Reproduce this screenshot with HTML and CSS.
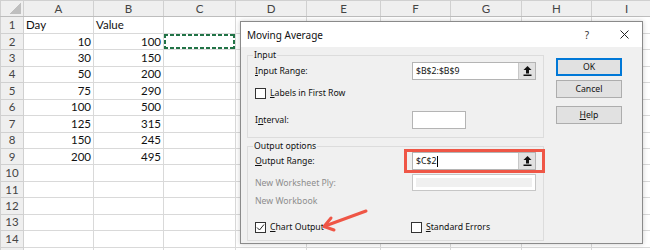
FILE: index.html
```html
<!DOCTYPE html>
<html lang="en">
<head>
    <meta charset="UTF-8">
    <title>Moving Average</title>
    <link rel="stylesheet" href="styles.css">
</head>
<body>

<table class="sheet">
    <colgroup>
        <col class="c-num"><col class="c-a"><col class="c-b"><col class="c-c"><col class="c-d">
        <col class="c-e"><col class="c-f"><col class="c-g"><col class="c-h"><col class="c-i">
    </colgroup>
    <tr class="head">
        <th class="corner"></th><th>A</th><th>B</th><th>C</th><th>D</th><th>E</th><th>F</th><th>G</th><th>H</th><th>I</th>
    </tr>
    <tr><th>1</th><td>Day</td><td>Value</td><td></td><td></td><td></td><td></td><td></td><td></td><td></td></tr>
    <tr><th>2</th><td class="num">10</td><td class="num">100</td><td class="marquee"></td><td></td><td></td><td></td><td></td><td></td><td></td></tr>
    <tr><th>3</th><td class="num">30</td><td class="num">150</td><td></td><td></td><td></td><td></td><td></td><td></td><td></td></tr>
    <tr><th>4</th><td class="num">50</td><td class="num">200</td><td></td><td></td><td></td><td></td><td></td><td></td><td></td></tr>
    <tr><th>5</th><td class="num">75</td><td class="num">290</td><td></td><td></td><td></td><td></td><td></td><td></td><td></td></tr>
    <tr><th>6</th><td class="num">100</td><td class="num">500</td><td></td><td></td><td></td><td></td><td></td><td></td><td></td></tr>
    <tr><th>7</th><td class="num">125</td><td class="num">315</td><td></td><td></td><td></td><td></td><td></td><td></td><td></td></tr>
    <tr><th>8</th><td class="num">150</td><td class="num">245</td><td></td><td></td><td></td><td></td><td></td><td></td><td></td></tr>
    <tr><th>9</th><td class="num">200</td><td class="num">495</td><td></td><td></td><td></td><td></td><td></td><td></td><td></td></tr>
    <tr><th>10</th><td></td><td></td><td></td><td></td><td></td><td></td><td></td><td></td><td></td></tr>
    <tr><th>11</th><td></td><td></td><td></td><td></td><td></td><td></td><td></td><td></td><td></td></tr>
    <tr><th>12</th><td></td><td></td><td></td><td></td><td></td><td></td><td></td><td></td><td></td></tr>
    <tr><th>13</th><td></td><td></td><td></td><td></td><td></td><td></td><td></td><td></td><td></td></tr>
    <tr><th>14</th><td></td><td></td><td></td><td></td><td></td><td></td><td></td><td></td><td></td></tr>
    <tr><th></th><td></td><td></td><td></td><td></td><td></td><td></td><td></td><td></td><td></td></tr>
</table>

<div class="dialog">
    <div class="titlebar">
        <span class="title">Moving Average</span>
        <span class="help-mark">?</span>
        <svg class="close" width="9" height="9" viewBox="0 0 9 9">
            <path d="M0.5 0.5 L8.5 8.5 M8.5 0.5 L0.5 8.5" stroke="#222" stroke-width="1" fill="none"/>
        </svg>
    </div>

    <div class="dialog-body">
        <div class="groups">
            <fieldset class="group group-input">
                <legend>Input</legend>
                <div class="field row-range">
                    <label><u>I</u>nput Range:</label>
                    <div class="textbox">
                        <span>$B$2:$B$9</span>
                        <span class="refbtn">
                            <svg width="9" height="10" viewBox="0 0 9 10"><path d="M4.5 0 L8.5 4 L6 4 L6 7.5 L3 7.5 L3 4 L0.5 4 Z M0.5 8.5 H8.5 V10 H0.5 Z" fill="#111"/></svg>
                        </span>
                    </div>
                </div>
                <div class="field row-labels">
                    <span class="check"></span>
                    <label><u>L</u>abels in First Row</label>
                </div>
                <div class="field row-interval">
                    <label>I<u>n</u>terval:</label>
                    <div class="textbox short"></div>
                </div>
            </fieldset>

            <fieldset class="group group-output">
                <legend>Output options</legend>
                <div class="field row-output">
                    <label><u>O</u>utput Range:</label>
                    <div class="highlight">
                        <div class="textbox">
                            <span>$C$2</span><span class="caret"></span>
                            <span class="refbtn">
                                <svg width="9" height="10" viewBox="0 0 9 10"><path d="M4.5 0 L8.5 4 L6 4 L6 7.5 L3 7.5 L3 4 L0.5 4 Z M0.5 8.5 H8.5 V10 H0.5 Z" fill="#111"/></svg>
                            </span>
                        </div>
                    </div>
                </div>
                <div class="field row-ply">
                    <label class="disabled">New Worksheet Ply:</label>
                    <div class="textbox disabled-box"></div>
                </div>
                <div class="field row-book">
                    <label class="disabled">New Workbook</label>
                </div>
                <div class="field row-checks">
                    <span class="check checked">
                        <svg width="9" height="9" viewBox="0 0 9 9"><path d="M1 4.5 L3.5 7 L8 1.5" stroke="#222" stroke-width="1" fill="none"/></svg>
                    </span>
                    <label class="chart-label"><u>C</u>hart Output</label>
                    <span class="check"></span>
                    <label><u>S</u>tandard Errors</label>
                </div>
            </fieldset>
        </div>

        <div class="buttons">
            <button class="btn default">OK</button>
            <button class="btn">Cancel</button>
            <button class="btn help"><u>H</u>elp</button>
        </div>
    </div>

    <!-- annotation arrow pointing at Chart Output -->
    <svg class="pointer" width="52" height="30" viewBox="0 0 52 30">
        <path d="M47 6 L6 21" stroke="#ef5646" stroke-width="3" stroke-linecap="round" fill="none"/>
        <path d="M12 13 L5 21.5 L15 25" stroke="#ef5646" stroke-width="3" stroke-linecap="round" stroke-linejoin="round" fill="none"/>
    </svg>
</div>

</body>
</html>
```

FILE: styles.css
```css
* {
    box-sizing: border-box;
}

body {
    margin: 0;
    width: 650px;
    height: 250px;
    overflow: hidden;
    position: relative;
    background: #fff;
    font-family: Lato, "Liberation Sans", sans-serif;
}

/* spreadsheet */
.sheet {
    border-collapse: collapse;
    table-layout: fixed;
    width: 661px;
}

.c-num { width: 23px; }
.c-a { width: 70px; }
.c-b { width: 70px; }
.c-c { width: 72px; }
.c-d { width: 71px; }
.c-e { width: 74px; }
.c-f { width: 70px; }
.c-g { width: 71px; }
.c-h { width: 70px; }
.c-i { width: 70px; }

.sheet tr {
    height: 16.45px;
}

.sheet td,
.sheet th {
    height: 16.45px;
    padding: 0 2px;
    border: 1px solid #d9d9d9;
    font-size: 11.5px;
    line-height: 14px;
    color: #111;
    white-space: nowrap;
    overflow: hidden;
    text-align: left;
}

.sheet th {
    background: #efefef;
    color: #444;
    font-weight: normal;
    text-align: center;
    border-color: #d0d0d0;
}

.sheet .head th {
    border-bottom-color: #bdbdbd;
}

.sheet th.corner {
    background: linear-gradient(to top left, #bfbfbf 50%, transparent 50%) no-repeat right 2px bottom 2px / 11px 12px, #efefef;
}

.sheet td.num {
    text-align: right;
}

.sheet td.marquee {
    background:
        repeating-linear-gradient(90deg, #217346 0 4px, transparent 4px 6px) left top / 100% 2px no-repeat,
        repeating-linear-gradient(90deg, #217346 0 4px, transparent 4px 6px) left bottom / 100% 2px no-repeat,
        repeating-linear-gradient(180deg, #217346 0 4px, transparent 4px 6px) left top / 2px 100% no-repeat,
        repeating-linear-gradient(180deg, #217346 0 4px, transparent 4px 6px) right top / 2px 100% no-repeat;
}

/* dialog */
.dialog {
    position: absolute;
    left: 240px;
    top: 21px;
    width: 403px;
    height: 223px;
    background: #f0f0f0;
    border: 1px solid #8a8a8a;
    box-shadow: 0 0 5px rgba(0, 0, 0, 0.2);
    font-family: "Noto Sans", "Open Sans", sans-serif;
    font-size: 8.7px;
    color: #111;
}

.titlebar {
    height: 25px;
    background: #fff;
    display: flex;
    align-items: center;
    padding-left: 6px;
}

.title {
    font-size: 10px;
    flex: 1;
}

.help-mark {
    font-size: 10px;
    color: #333;
    margin-right: 31px;
}

.close {
    margin-right: 13px;
}

.dialog-body {
    display: flex;
    padding: 2px 0 0 6px;
}

.groups {
    width: 297px;
    display: flex;
    flex-direction: column;
    gap: 2px;
}

.group {
    margin: 0;
    min-width: 0;
    border: 1px solid #dcdcdc;
    padding: 0 7px 8px;
}

.group legend {
    padding: 0 1px;
    margin-left: -2px;
    line-height: 12px;
}

.field {
    display: flex;
    align-items: center;
    height: 18px;
}

.field label {
    width: 157px;
}

.row-range { margin-top: 1px; }
.row-labels { margin-top: 4px; }
.row-interval { margin-top: 9px; }

.row-labels label,
.row-checks label {
    width: auto;
}

.textbox {
    width: 124px;
    height: 18px;
    background: #fff;
    border: 1px solid #b4b4b4;
    display: flex;
    align-items: center;
    padding-left: 3px;
}

.textbox.short {
    width: 54px;
}

.refbtn {
    margin-left: auto;
    width: 17px;
    height: 16px;
    background: #e1e1e1;
    border-left: 1px solid #c8c8c8;
    display: flex;
    align-items: center;
    justify-content: center;
}

.caret {
    width: 1px;
    height: 11px;
    background: #000;
    margin-left: 1px;
}

.highlight {
    margin: -3px -9px -3px -8px;
    padding: 0 6px 0 5px;
    border: 3px solid #ef5646;
}

.row-output {
    margin-top: 0;
}

.row-ply {
    margin-top: 4px;
    height: 17px;
}

.disabled-box {
    height: 17px;
    background: #f0f0f0;
    border-color: #c6c6c6;
    box-shadow: inset 0 0 0 3px #fff;
}

.disabled {
    color: #8d8d8d;
}

.row-book {
    margin-top: 1px;
}

.row-checks {
    margin-top: 8px;
    margin-bottom: -4px;
}

.check {
    width: 11px;
    height: 11px;
    background: #fff;
    border: 1px solid #333;
    margin-right: 4px;
    display: flex;
    align-items: center;
    justify-content: center;
}

.chart-label {
    margin-right: 87px;
}

.buttons {
    margin-left: 12px;
    padding-top: 9px;
    display: flex;
    flex-direction: column;
    gap: 4px;
}

.btn {
    width: 66px;
    height: 18px;
    padding: 0;
    background: #e1e1e1;
    border: 1px solid #adadad;
    font-family: inherit;
    font-size: 8.7px;
    color: #111;
}

.btn.default {
    border-color: #0078d7;
    box-shadow: inset 0 0 0 1px #0078d7;
}

.btn.help {
    margin-top: 4px;
}

.pointer {
    position: absolute;
    left: 78px;
    top: 183px;
}
```
